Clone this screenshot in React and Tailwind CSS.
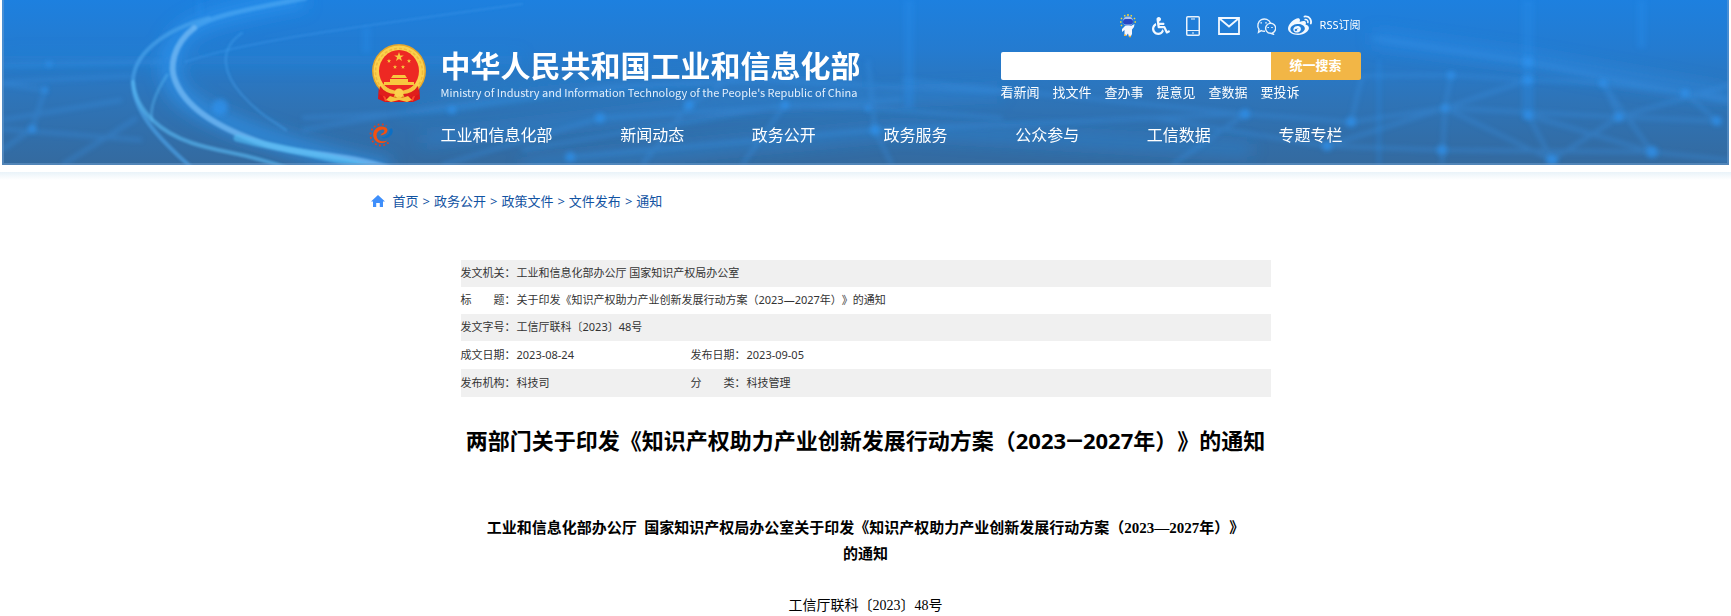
import React, { useState } from 'react';
import { FaWeibo, FaWheelchair } from 'react-icons/fa';

const NAV = ['工业和信息化部', '新闻动态', '政务公开', '政务服务', '公众参与', '工信数据', '专题专栏'];
const QUICK = ['看新闻', '找文件', '查办事', '提意见', '查数据', '要投诉'];
const CRUMBS = ['首页', '政务公开', '政策文件', '文件发布', '通知'];

const INFO = [
    [['发文机关：', '工业和信息化部办公厅 国家知识产权局办公室']],
    [['标　　题：', '关于印发《知识产权助力产业创新发展行动方案（2023—2027年）》的通知']],
    [['发文字号：', '工信厅联科〔2023〕48号']],
    [['成文日期：', '2023-08-24'], ['发布日期：', '2023-09-05']],
    [['发布机构：', '科技司'], ['分　　类：', '科技管理']],
];

// [x, y, r] of the glowing points in the banner
const NODES = [
    [30, 129, 4], [43, 90, 3], [47, 64, 3], [218, 107, 8], [450, 110, 4], [568, 157, 5],
    [598, 118, 5], [687, 105, 5], [783, 105, 4], [866, 108, 3], [873, 130, 5],
    [1243, 114, 5], [1349, 122, 5], [1325, 146, 5], [1449, 75, 4], [1443, 108, 4], [1440, 150, 5],
    [1526, 62, 5], [1526, 80, 5], [1526, 115, 4], [1601, 83, 4], [1617, 117, 5], [1683, 93, 4],
    [1715, 121, 5], [1650, 152, 6], [1550, 160, 6],
];

const Banner = () => (
    <svg viewBox="0 0 1727 165" preserveAspectRatio="xMidYMid slice" className="absolute inset-0 w-full h-full" aria-hidden="true">
        <defs>
            <linearGradient id="sky" x1="0" y1="0" x2="0" y2="1">
                <stop offset="0" stopColor="#1d80df" />
                <stop offset="0.3" stopColor="#247bd0" />
                <stop offset="0.6" stopColor="#2e74b8" />
                <stop offset="1" stopColor="#346a9f" />
            </linearGradient>
            <filter id="soft" x="-20%" y="-20%" width="140%" height="140%"><feGaussianBlur stdDeviation="1.2" /></filter>
            <filter id="haze" x="-20%" y="-20%" width="140%" height="140%"><feGaussianBlur stdDeviation="2.6" /></filter>
            <filter id="glow" x="-30%" y="-30%" width="160%" height="160%"><feGaussianBlur stdDeviation="8" /></filter>
        </defs>
        <rect width="1727" height="165" fill="url(#sky)" />

        <g fill="none" stroke="#2f96f2" filter="url(#glow)">
            <path d="M303 -2C240 10 195 18 178 37S165 85 185 100S250 140 388 170" strokeWidth="20" opacity="0.6" />
            <path d="M0 60H520M400 112Q560 75 860 80" strokeWidth="12" opacity="0.2" />
            <path d="M1370 38L1526 60L1727 95" strokeWidth="14" opacity="0.4" />
            <path d="M520 165L900 130L1250 150" strokeWidth="14" opacity="0.3" />
            <path d="M420 140L720 105L1000 92" strokeWidth="12" opacity="0.3" />
        </g>

        {/* mesh */}
        <g fill="none" stroke="#3a93e6" strokeWidth="4" opacity="0.36" filter="url(#haze)">
            <path d="M0 66L160 62M0 82L130 76M0 120L120 100M0 129L140 140M30 129L43 90L0 84M30 129L0 150M60 165L135 118" />
            <path d="M300 118L450 110L600 88L760 80L1000 92M300 130Q520 90 700 84M687 105L760 60M598 118L900 100M598 118L440 165M687 105L640 165M520 150L783 105L866 108L1000 118M866 60L873 130L890 165M783 105L740 165M568 157L873 130L1243 114" />
            <path d="M900 80L1243 114L1349 122L1443 108L1617 117L1715 121M1000 125L1150 118L1325 146L1440 150L1650 152M1243 114L1170 165M1349 122L1360 76L1449 75L1526 80L1601 83L1727 98" />
            <path d="M1370 38L1526 62L1683 93L1727 102M1449 75L1443 108L1440 165M1526 80L1443 108L1325 146M1526 115L1550 160L1617 117L1601 83L1650 152M1683 93L1715 121M1526 115L1650 152L1727 160M1443 108L1550 160M1617 117L1727 85" />
        </g>
        <g fill="#2b90ee" opacity="0.3" filter="url(#haze)">
            <rect x="1520" width="12" height="120" />
            <rect x="1635" width="9" height="48" />
            <rect x="902" width="10" height="108" />
            <rect x="360" y="27" width="9" height="26" />
            <rect x="195" width="5" height="18" />
            <rect x="1375" y="60" width="4" height="105" />
        </g>
        <g fill="#2f93ef" opacity="0.7" filter="url(#haze)">
            {NODES.map(([x, y, r]) => (
                <circle key={`${x}-${y}`} cx={x} cy={y} r={r} />
            ))}
        </g>

        {/* light trails */}
        <g fill="none" strokeLinecap="round" filter="url(#soft)">
            <path d="M183 62C240 42 330 30 520 4" stroke="#3a97ec" strokeWidth="2" opacity="0.45" />
            <path d="M240 33C215 50 222 75 240 95S270 120 284 130" stroke="#46a2f0" strokeWidth="2.5" opacity="0.4" />
            <path d="M207 18C160 30 131 55 131 82S152 135 190 168" stroke="#4fa8ee" strokeWidth="4" opacity="0.6" />
            <path d="M131 82C134 112 160 133 190 143S240 152 285 168" stroke="#5cbcf5" strokeWidth="4" opacity="0.6" />
            <path d="M165 75C152 95 148 110 150 120" stroke="#5cbcf5" strokeWidth="3" opacity="0.4" />
            <path d="M303 -2C250 9 210 15 192 28" stroke="#4aa5f2" strokeWidth="5" opacity="0.7" />
            <path d="M192 28C170 45 168 68 173 80C184 110 222 130 260 143S340 152 392 170" stroke="#6fb8f4" strokeWidth="6" opacity="0.8" />
            <path d="M235 138C280 150 330 156 375 170" stroke="#56c0f5" strokeWidth="7" opacity="0.6" />
        </g>
        <path d="M1 0V164H1726V0" fill="none" stroke="#6f9fd0" strokeWidth="2" opacity="0.5" />
    </svg>
);

const STAR = 'M0 -5L1.2 -1.6L4.8 -1.5L1.9 .6L3 4L0 2L-3 4L-1.9 .6L-4.8 -1.5L-1.2 -1.6Z';

const Emblem = () => (
    <svg viewBox="0 0 54 58" className="w-[54px] h-[58px] shrink-0" role="img" aria-label="国徽">
        <path d="M7 40L6 55L13 58H41L48 55L47 40Z" fill="#d8161b" />
        <path d="M10 47L14 57M44 47L40 57" stroke="#ff4a2a" strokeWidth="2" />
        <ellipse cx="27" cy="27" rx="27" ry="27" fill="#e5a52b" />
        <ellipse cx="27" cy="27" rx="25.5" ry="25.5" fill="#fbd04c" />
        <ellipse cx="27" cy="28" rx="23.5" ry="23.5" fill="none" stroke="#f0b93c" strokeWidth="1.5" strokeDasharray="3 2" />
        <ellipse cx="27" cy="27" rx="20" ry="21" fill="#ed2823" />
        <g fill="#f8c83f">
            <path d={STAR} transform="translate(27 13)" />
            <path d={STAR} transform="translate(17 17) scale(.45)" />
            <path d={STAR} transform="translate(37 17) scale(.45)" />
            <path d={STAR} transform="translate(23 23) scale(.45)" />
            <path d={STAR} transform="translate(31 23) scale(.45)" />
            <path d="M21 31H33L35 34H19ZM18 35H36V38H42V41H12V38H18Z" />
        </g>
        <path d="M10 40Q18 47 27 47T44 40L41 49Q34 53 27 50Q20 53 13 49Z" fill="#f6c440" />
        <path d="M8 42Q14 50 23 50L21 54Q12 53 7 50ZM46 42Q40 50 31 50L33 54Q42 53 47 50Z" fill="#e01e1c" />
        <circle cx="27" cy="49" r="4.5" fill="#fbd04c" />
        <path d="M14 56L18 52L24 54L27 52L30 54L36 52L40 56L35 58L27 56L19 58Z" fill="#f6c440" />
    </svg>
);

const GearLogo = () => (
    <svg viewBox="0 0 24 24" className="w-6 h-6" fill="none" aria-hidden="true">
        <path d="M19.5 19.5A10.6 10.6 0 1 1 17.5 2.8" stroke="#e0401f" strokeWidth="1.8" strokeDasharray="1.8 2.4" />
        <path d="M18.5 17.5A8.3 8.3 0 1 1 12 3.5Q18.5 3.5 18.5 7.5Q18 11.5 11.5 12.5L12.5 10.8Q15.5 9.8 15.5 7.8Q15 6 12 6.8Q7.5 8.5 7.5 12.5Q8 17.8 13 18.3Q16 18.5 18.5 17.5Z" fill="#f4500f" />
        <path d="M12 14.5Q20.5 13.5 20.5 6.5Q21.5 5 23 5.5Q25.5 10.5 19.5 14.3Q15.5 16.4 12 14.5Z" fill="#0d6fc4" />
    </svg>
);

const Robot = () => (
    <svg viewBox="0 0 16 24" className="w-4 h-6" aria-hidden="true">
        <path d="M2 5L1 4M5 2.5L4.5 1M8 2V0M11 2.5L11.5 1M14 5L15 4M1.5 8H0M14.5 8H16M2 11L1 12" stroke="#f3d43b" strokeWidth="1.5" />
        <rect x="3" y="2.5" width="10" height="9.5" rx="4.5" fill="#a9c4f0" />
        <rect x="3" y="5" width="10" height="5.5" rx="2.7" fill="#2748c4" />
        <path d="M5 12H11L14.5 10L14 13L12 15.5V20L10.5 23H9L8 19.5L6 22H4.5L4.5 16L2 18V15Z" fill="#f4f7fd" />
        <path d="M9 22.5H11M4 21.2H6" stroke="#f0b43b" strokeWidth="1.5" />
    </svg>
);

const PhoneIcon = () => (
    <svg viewBox="0 0 14 20" className="w-3.5 h-5" fill="none" stroke="#e8f2fc" aria-hidden="true">
        <rect x=".75" y=".75" width="12.5" height="18.5" rx="1" strokeWidth="1.5" />
        <path d="M1 14.5H13M5 3H9M6 17H8" strokeWidth="1.2" />
    </svg>
);

const MailIcon = () => (
    <svg viewBox="0 0 22 18" className="w-[22px] h-[18px]" fill="none" stroke="#f2f8ff" strokeWidth="1.8" aria-hidden="true">
        <path d="M1 1H21V17H1ZM1.5 1.5L11 9.5L20.5 1.5" />
    </svg>
);

const WechatIcon = () => (
    <svg viewBox="0 0 20 18" className="w-5 h-[18px]" fill="none" stroke="#e8f2fc" strokeWidth="1.4" aria-hidden="true">
        <path d="M9 14.2Q7 14.4 5.2 13.6L2.5 15.3L3 12.3A6.6 6.6 0 1 1 14.6 6.2" />
        <path d="M16.6 15.9L17.3 17.2L14.6 16.3A5 5 0 1 1 16.6 15.9Z" />
        <path d="M5.2 5.2V6.4M10 5.2V6.4M12.2 10V11M16 10V11" strokeWidth="1.6" />
    </svg>
);

// side-on wheelchair with an upright figure
const AccessIcon = () => <FaWheelchair size={20} color="#f2f8ff" className="w-[18px]" />;

const HomeIcon = () => (
    <svg viewBox="0 0 14 12" className="w-3.5 h-3" fill="#3f8ffb" aria-hidden="true">
        <path d="M7 0L14 6.6H12V12H8.8V8H5.2V12H2V6.6H0Z" />
    </svg>
);

const TopIcons = () => (
    <div className="flex items-center h-6 text-white">
        <a href="#robot" aria-label="智能问答" className="mr-4"><Robot /></a>
        <a href="#access" aria-label="无障碍" className="mr-4"><AccessIcon /></a>
        <a href="#mobile" aria-label="移动版" className="mr-[18px]"><PhoneIcon /></a>
        <a href="#mail" aria-label="邮箱" className="mr-4"><MailIcon /></a>
        <a href="#wechat" aria-label="微信" className="mr-3"><WechatIcon /></a>
        <a href="#weibo" aria-label="微博" className="mr-2"><FaWeibo size={24} color="#f2f8ff" /></a>
        <a href="#rss" className="pb-0.5 text-[11px]">RSS订阅</a>
    </div>
);

const Header = () => {
    const [query, setQuery] = useState('');

    return (
        <header className="relative mx-0.5 text-white">
            <Banner />
            <div className="relative w-[990px] max-w-full mx-auto h-[165px]">
                <div className="flex justify-between">
                    <div className="flex pt-[44px] pl-px">
                        <Emblem />
                        <div className="ml-[15px] whitespace-nowrap font-['Noto_Sans_CJK_SC',sans-serif]">
                            <h1 className="text-[30px] leading-10 font-bold">中华人民共和国工业和信息化部</h1>
                            <p className="text-[11px] leading-4 text-[#e2effc]">
                                Ministry of Industry and Information Technology of the People's Republic of China
                            </p>
                        </div>
                    </div>
                    <div className="w-[360px] pt-3.5 flex flex-col">
                        <div className="flex justify-end"><TopIcons /></div>
                        <form className="flex h-7 mt-3.5 rounded-xs overflow-hidden" onSubmit={e => e.preventDefault()}>
                            <input
                                aria-label="搜索"
                                value={query}
                                onChange={e => setQuery(e.target.value)}
                                className="flex-1 min-w-0 bg-white px-2 text-[13px] text-[#333] focus:outline-none"
                            />
                            <button type="submit" className="w-[90px] bg-[#f2b646] text-[13px] font-bold text-white">统一搜索</button>
                        </form>
                        <div className="flex gap-[13px] mt-[3px] text-[13px] leading-[18px]">
                            {QUICK.map(q => <a key={q} href={`#${q}`}>{q}</a>)}
                        </div>
                    </div>
                </div>
                <nav className="flex items-center mt-[21px] -ml-0.5">
                    <a href="#home" aria-label="首页"><GearLogo /></a>
                    <div className="flex justify-between w-[902px] ml-12 text-base leading-6">
                        {NAV.map(n => <a key={n} href={`#${n}`}>{n}</a>)}
                    </div>
                </nav>
            </div>
        </header>
    );
};

const App = () => (
    <div className="min-h-screen overflow-hidden bg-white [text-spacing-trim:space-all] font-['Noto_Sans','Noto_Sans_CJK_SC',sans-serif]">
        <Header />
        <div className="h-2 mt-[7px] bg-linear-to-b from-[#e9f3f9] to-white" />

        <nav className="flex items-center w-[990px] max-w-full mx-auto mt-3 text-[13px] leading-[18px] text-[#1253a2]">
            <HomeIcon />
            <ol className="flex ml-2">
                {CRUMBS.map((c, i) => (
                    <li key={c}>
                        {i > 0 && <span className="mx-1">&gt;</span>}
                        <a href={`#${c}`}>{c}</a>
                    </li>
                ))}
            </ol>
        </nav>

        <main className="w-[810px] max-w-full mx-auto text-black">
            <table className="w-full mt-[50px] table-fixed text-[11px] leading-[15px] text-[#333]">
                <colgroup>
                    <col className="w-[56px]" />
                    <col className="w-[174px]" />
                    <col className="w-[56px]" />
                    <col />
                </colgroup>
                <tbody>
                    {INFO.map((row, i) => (
                        <tr key={i} className={`${i > 2 ? 'h-7' : 'h-[27px]'} ${i % 2 === 0 ? 'bg-[#f0f0f0]' : ''}`}>
                            {row.map(([label, value]) => (
                                <React.Fragment key={label}>
                                    <th className="p-0 pb-0.5 font-normal text-left whitespace-nowrap">{label}</th>
                                    <td className="p-0 pb-0.5" colSpan={row.length === 1 ? 3 : 1}>{value}</td>
                                </React.Fragment>
                            ))}
                        </tr>
                    ))}
                </tbody>
            </table>

            <h1 className="mt-[27px] text-[22px] leading-8 font-bold text-center whitespace-nowrap">
                两部门关于印发《知识产权助力产业创新发展行动方案（2023<span className="font-[Roboto]">—</span>2027年）》的通知
            </h1>

            <div className="mt-[57px] text-center font-['Liberation_Serif','Noto_Sans_CJK_SC',serif]">
                <h2 className="text-[15px] leading-[26px] font-bold">
                    工业和信息化部办公厅&nbsp; 国家知识产权局办公室关于印发《知识产权助力产业创新发展行动方案（2023—2027年）》
                    <br />
                    的通知
                </h2>
                <p className="mt-[26px] text-sm leading-[26px]">工信厅联科〔2023〕48号</p>
            </div>
        </main>
    </div>
);

export default App;
